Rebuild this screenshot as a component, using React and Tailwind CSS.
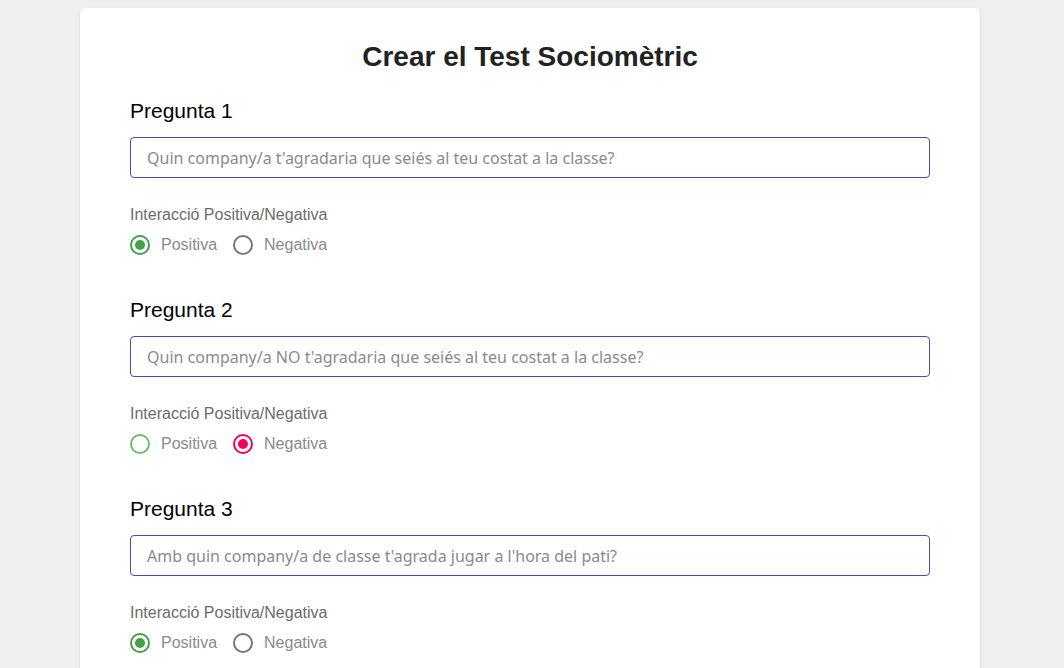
import React, { useState } from 'react'

const questions = [
  { id: 1, placeholder: "Quin company/a t'agradaria que seiés al teu costat a la classe?", value: 'positiva' },
  { id: 2, placeholder: "Quin company/a NO t'agradaria que seiés al teu costat a la classe?", value: 'negativa' },
  { id: 3, placeholder: "Amb quin company/a de classe t'agrada jugar a l'hora del pati?", value: 'positiva' },
]

const Radio = ({ checked, color, idle, label, onClick }) => (
  <button type="button" onClick={onClick} className="flex items-center gap-[11px] h-6">
    <span
      className={`w-5 h-5 rounded-full border-2 flex items-center justify-center ${checked ? color.border : idle}`}
    >
      {checked && <span className={`w-[10px] h-[10px] rounded-full ${color.dot}`} />}
    </span>
    <span className="text-[16px] text-[#8a8a8a] leading-6">{label}</span>
  </button>
)

const green = { border: 'border-[#43a047]', dot: 'bg-[#43a047]' }
const pink = { border: 'border-[#f50057]', dot: 'bg-[#f50057]' }

const Question = ({ q }) => {
  const [value, setValue] = useState(q.value)
  return (
    <div className="flex flex-col">
      <h2 className="text-[21px] leading-6 text-black">Pregunta {q.id}</h2>
      <input
        type="text"
        placeholder={q.placeholder}
        className="mt-[14px] h-[41px] w-full border border-[#3f51b5] rounded pl-4 text-[16px] placeholder:text-[#8a8a8a] focus:outline-none"
        style={{ fontFamily: '"Noto Sans", sans-serif' }}
      />
      <p className="mt-[27px] text-[16px] leading-5 text-[#6b6b6b]">Interacció Positiva/Negativa</p>
      <div className="mt-2 flex items-center gap-4">
        <Radio
          checked={value === 'positiva'}
          color={green}
          idle={value === 'negativa' ? 'border-[#6dbb70]' : 'border-[#757575]'}
          label="Positiva"
          onClick={() => setValue('positiva')}
        />
        <Radio
          checked={value === 'negativa'}
          color={pink}
          idle="border-[#757575]"
          label="Negativa"
          onClick={() => setValue('negativa')}
        />
      </div>
    </div>
  )
}

const App = () => {
  return (
    <div className="min-h-screen bg-[#efefef] pt-2" style={{ fontFamily: '"Liberation Sans", Arial, sans-serif' }}>
      <div className="ml-[80px] w-[900px] bg-white rounded-md shadow-sm px-[50px] pt-8 pb-10">
        <h1 className="text-[28px] leading-[34px] font-bold text-[#222] text-center">Crear el Test Sociomètric</h1>
        <div className="mt-[25px] flex flex-col gap-[41px]">
          {questions.map((q) => (
            <Question key={q.id} q={q} />
          ))}
        </div>
      </div>
    </div>
  )
}

export default App
